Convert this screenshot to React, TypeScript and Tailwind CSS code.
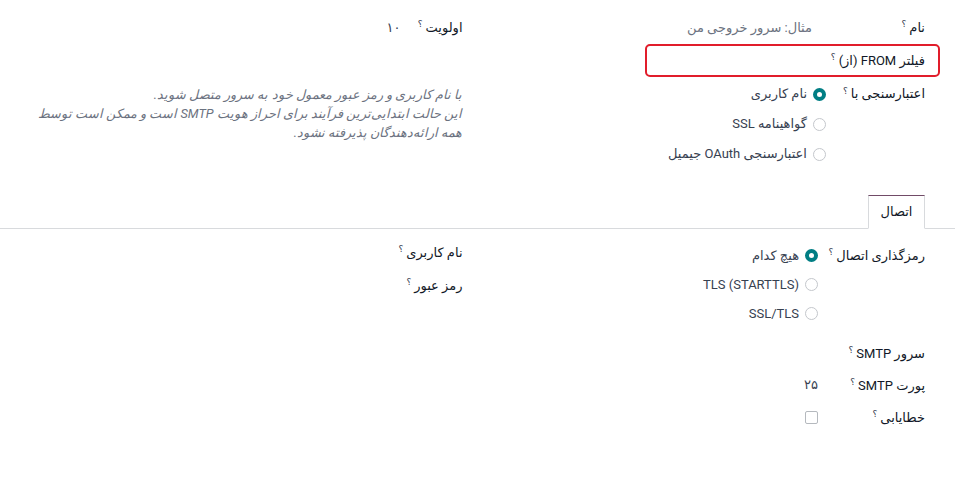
import React from "react";

const font = "font-['Roboto','DejaVu_Sans',sans-serif]";

function Hint() {
  return (
    <sup className="mr-[3px] text-[9px] font-normal text-[#374151]">؟</sup>
  );
}

function Label({ text }: { text: string }) {
  return (
    <span className="whitespace-nowrap text-[#111827]">
      {text}
      <Hint />
    </span>
  );
}

function Radio({ checked, label }: { checked?: boolean; label: string }) {
  return (
    <div className="flex items-center gap-[6px]">
      <span
        className={
          checked
            ? "box-border h-[13px] w-[13px] rounded-full border-[4px] border-[#017e84] bg-white"
            : "box-border h-[13px] w-[13px] rounded-full border border-[#c4c7cc] bg-white"
        }
      />
      <span className="whitespace-nowrap text-[#374151]">{label}</span>
    </div>
  );
}

export default function App() {
  return (
    <div
      dir="rtl"
      className={`${font} h-[477px] w-[955px] overflow-hidden bg-white text-[13px] text-[#111827]`}
    >
      {/* top groups */}
      <div className="grid grid-cols-2 px-[15px] pt-[11px]">
        {/* right group */}
        <div className="flex flex-col">
          <div className="flex h-[33px] items-center pr-[15px]">
            <div className="w-[99px] shrink-0">
              <Label text="نام" />
            </div>
            <span className="pr-[14px] text-[#6b7280]">مثال: سرور خروجی من</span>
          </div>
          <div className="flex h-[33px] w-[295px] items-center rounded-[5px] border-2 border-[#e11d2b] pr-[13px]">
            <Label text="فیلتر FROM (از)" />
          </div>
          <div className="mt-[2px] flex pr-[15px]">
            <div className="flex h-[30px] w-[99px] shrink-0 items-center">
              <Label text="اعتبارسنجی با" />
            </div>
            <div className="flex flex-col">
              <div className="flex h-[30px] items-center">
                <Radio checked label="نام کاربری" />
              </div>
              <div className="flex h-[30px] items-center">
                <Radio label="گواهینامه SSL" />
              </div>
              <div className="flex h-[30px] items-center">
                <Radio label="اعتبارسنجی OAuth جیمیل" />
              </div>
            </div>
          </div>
        </div>

        {/* left group */}
        <div className="flex flex-col pr-[15px]">
          <div className="flex h-[33px] items-center">
            <div className="w-[62px] shrink-0">
              <Label text="اولویت" />
            </div>
            <span className="text-[#374151]">۱۰</span>
          </div>
          <p className="mt-[41px] whitespace-nowrap text-[12.75px] leading-[19px] italic text-[#6b7280]">
            با نام کاربری و رمز عبور معمول خود به سرور متصل شوید.
            <br />
            این حالت ابتدایی‌ترین فرآیند برای احراز هویت SMTP است و ممکن است توسط
            <br />
            همه ارائه‌دهندگان پذیرفته نشود.
          </p>
        </div>
      </div>

      {/* notebook */}
      <div className="mt-[26px] flex border-b border-[#d8dadd] pr-[30px]">
        <div className="-mb-px flex h-[34px] w-[57px] items-center justify-center border border-b-white border-[#d8dadd] border-t-[#714b67] bg-white text-[#111827]">
          اتصال
        </div>
      </div>

      {/* bottom groups */}
      <div className="grid grid-cols-2 px-[15px] pt-[7px]">
        {/* right group */}
        <div className="flex flex-col pr-[15px] pt-[5px]">
          <div className="mb-[9px] flex">
            <div className="flex h-[29px] w-[107px] shrink-0 items-center">
              <Label text="رمزگذاری اتصال" />
            </div>
            <div className="flex flex-col">
              <div className="flex h-[29px] items-center">
                <Radio checked label="هیچ کدام" />
              </div>
              <div className="flex h-[29px] items-center">
                <Radio label="TLS (STARTTLS)" />
              </div>
              <div className="flex h-[29px] items-center">
                <Radio label="SSL/TLS" />
              </div>
            </div>
          </div>
          <div className="flex h-[32px] items-center">
            <div className="w-[107px] shrink-0">
              <Label text="سرور SMTP" />
            </div>
          </div>
          <div className="flex h-[32px] items-center">
            <div className="w-[107px] shrink-0">
              <Label text="پورت SMTP" />
            </div>
            <span className="text-[#374151]">۲۵</span>
          </div>
          <div className="flex h-[32px] items-center">
            <div className="w-[107px] shrink-0">
              <Label text="خطایابی" />
            </div>
            <span className="box-border h-[13px] w-[13px] rounded-[2px] border border-[#b5b9be] bg-white" />
          </div>
        </div>

        {/* left group */}
        <div className="flex flex-col pr-[15px]">
          <div className="flex h-[33px] items-center">
            <Label text="نام کاربری" />
          </div>
          <div className="flex h-[33px] items-center">
            <Label text="رمز عبور" />
          </div>
        </div>
      </div>
    </div>
  );
}
